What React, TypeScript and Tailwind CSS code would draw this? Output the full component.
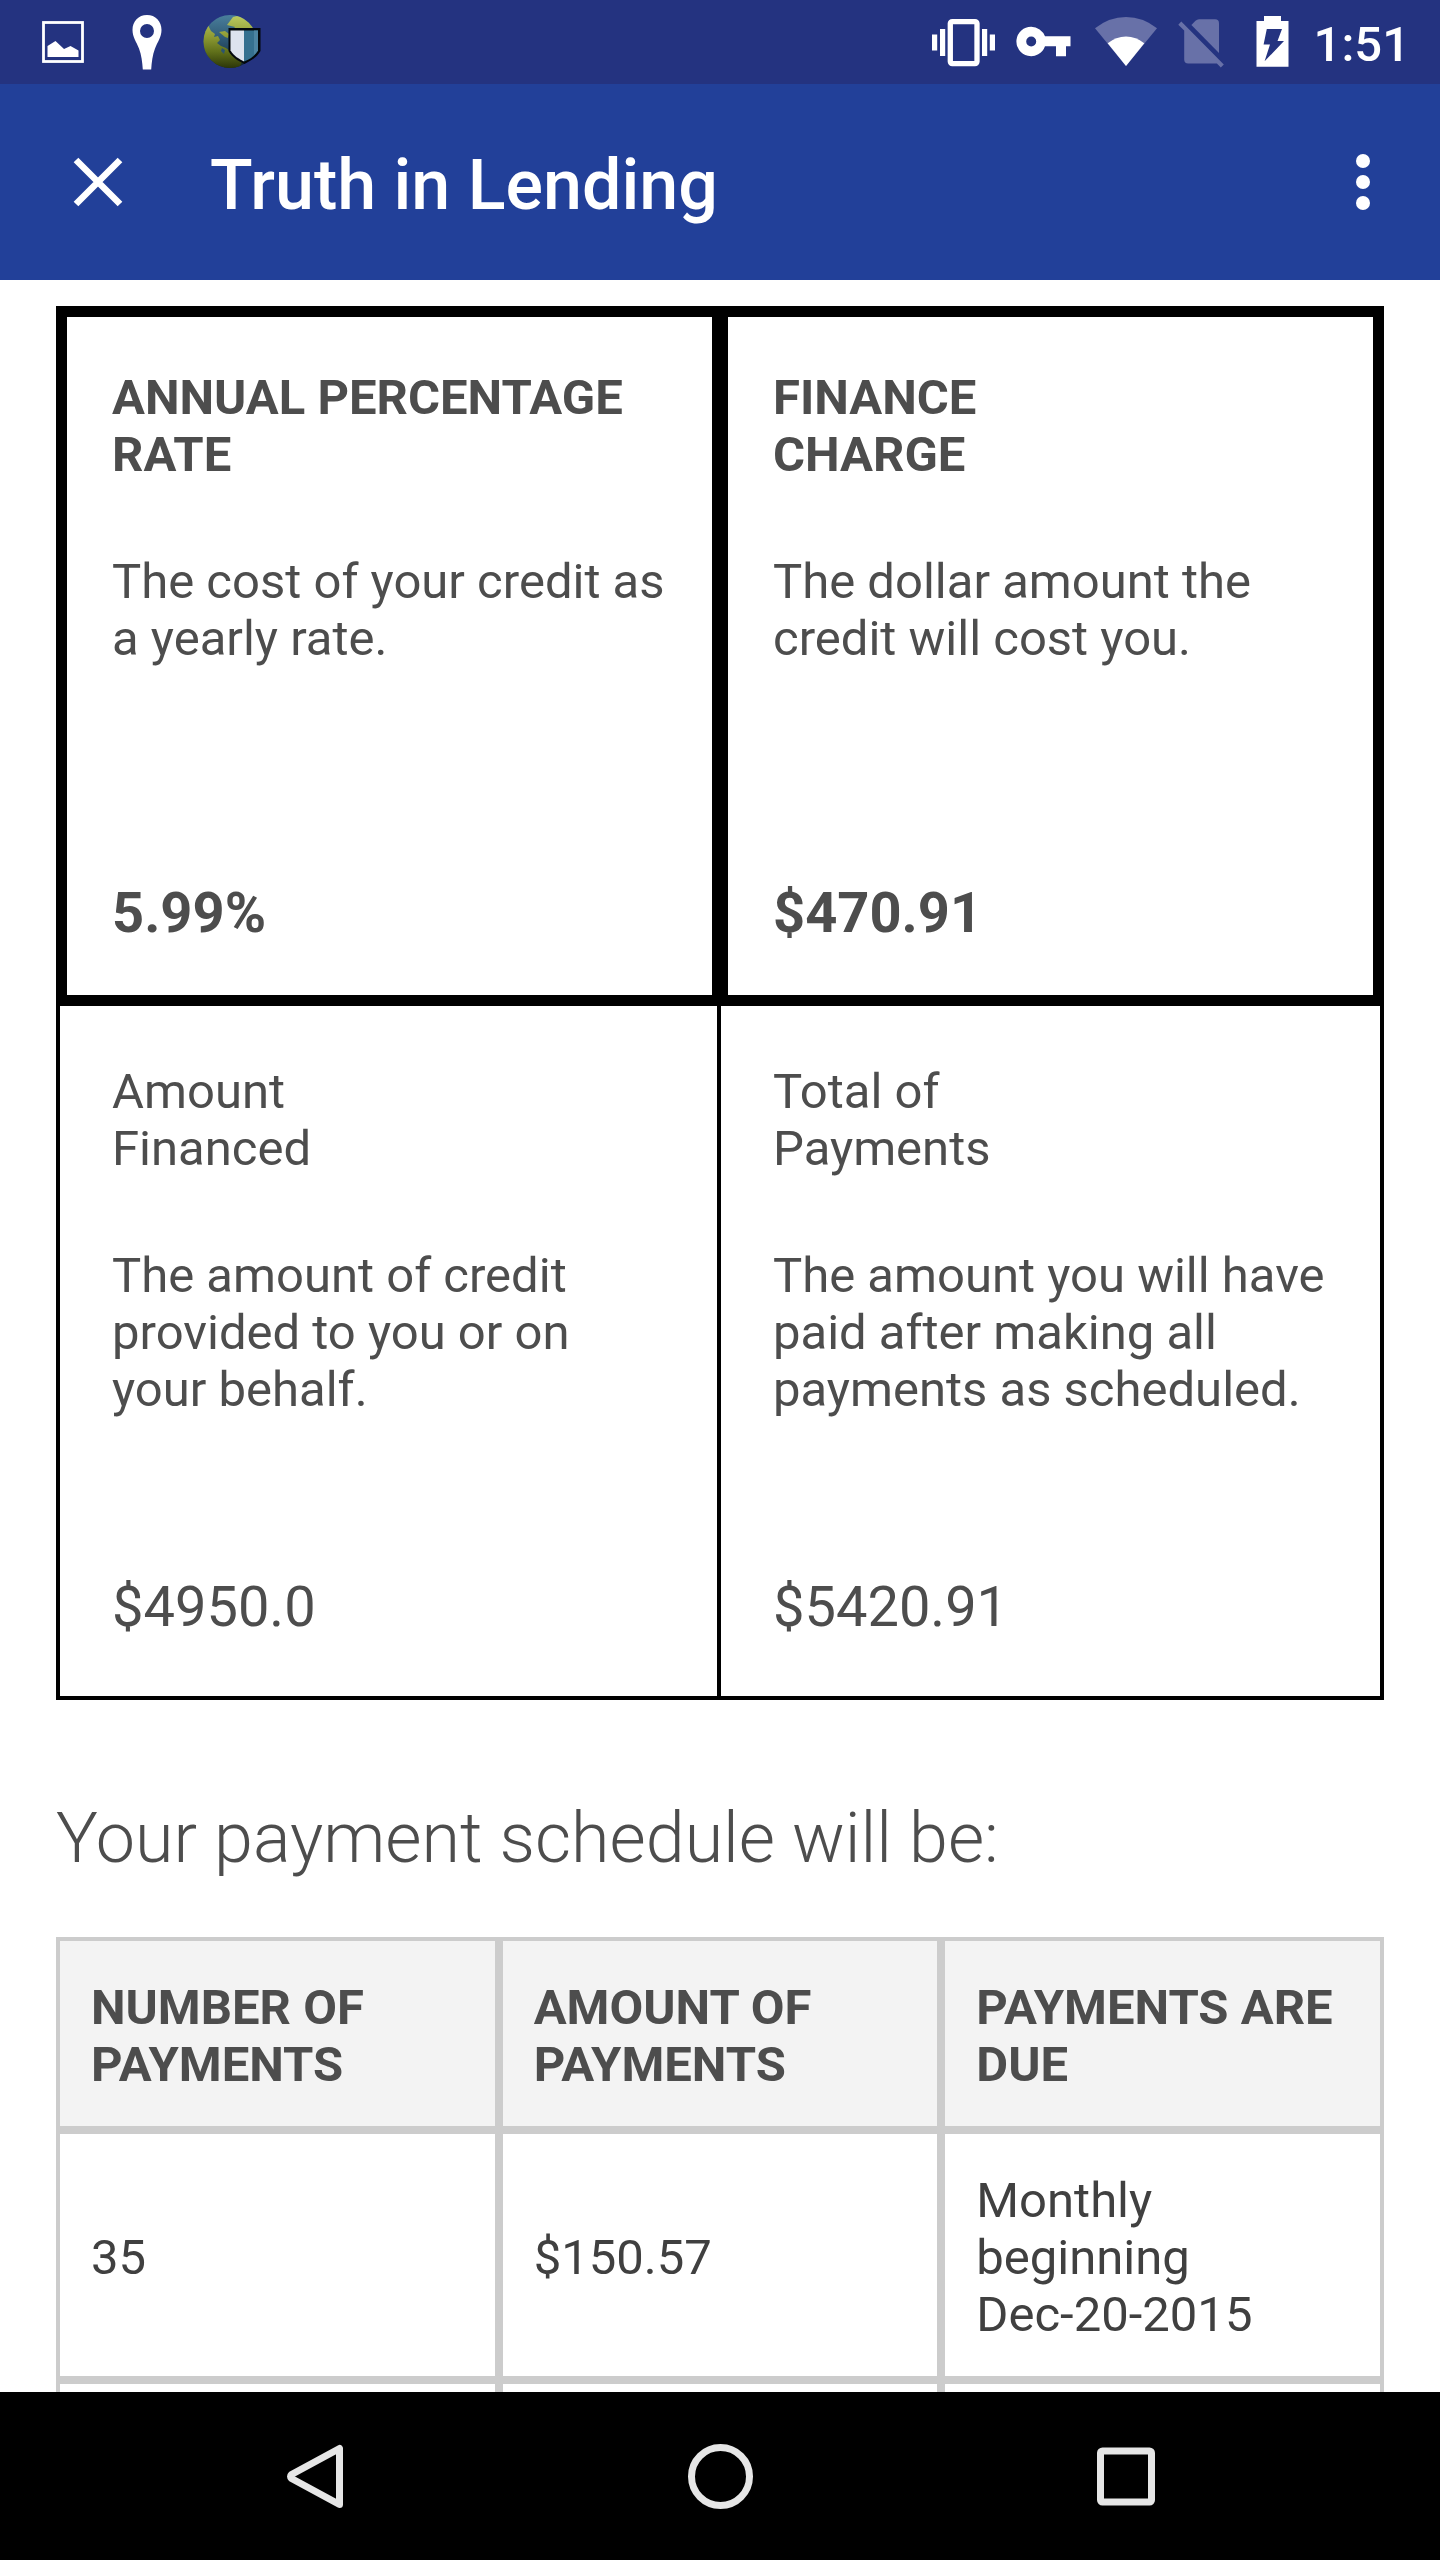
import React from "react";

type Disclosure = {
  title: React.ReactNode;
  description: string;
  value: string;
};

const primary: Disclosure[] = [
  {
    title: "ANNUAL PERCENTAGE RATE",
    description: "The cost of your credit as a yearly rate.",
    value: "5.99%",
  },
  {
    title: (
      <>
        FINANCE
        <br />
        CHARGE
      </>
    ),
    description: "The dollar amount the credit will cost you.",
    value: "$470.91",
  },
];

const secondary: Disclosure[] = [
  {
    title: (
      <>
        Amount
        <br />
        Financed
      </>
    ),
    description: "The amount of credit provided to you or on your behalf.",
    value: "$4950.0",
  },
  {
    title: (
      <>
        Total of
        <br />
        Payments
      </>
    ),
    description: "The amount you will have paid after making all payments as scheduled.",
    value: "$5420.91",
  },
];

const headings = ["NUMBER OF PAYMENTS", "AMOUNT OF PAYMENTS", "PAYMENTS ARE DUE"];

function ImageIcon() {
  return (
    <svg width="84" height="84" viewBox="0 0 84 84" aria-hidden="true">
      <rect x="22.5" y="22.5" width="39" height="39" fill="none" stroke="#fff" strokeWidth="2.8" />
      <path d="M26.5 57V46L34.5 41 43 49 49.5 46 57.5 50.5V57Z" fill="#fff" />
    </svg>
  );
}

function PinIcon() {
  return (
    <svg width="84" height="84" viewBox="0 0 84 84" aria-hidden="true">
      <path
        fill="#fff"
        fillRule="evenodd"
        d="M42 15C33.5 15 27.5 21.3 27.5 30C27.5 37 31.5 42 34 48.5C36.5 55 37.3 62 37.8 69.5H46.2C46.7 62 47.5 55 50 48.5C52.5 42 56.5 37 56.5 30C56.5 21.3 50.5 15 42 15ZM42 24A7 7 0 1 1 42 38A7 7 0 1 1 42 24Z"
      />
    </svg>
  );
}

function GlobeShieldIcon() {
  return (
    <svg width="84" height="84" viewBox="0 0 84 84" aria-hidden="true">
      <defs>
        <linearGradient id="sea" x1="0" y1="0" x2="0" y2="1">
          <stop offset="0" stopColor="#4a7f9c" />
          <stop offset="0.5" stopColor="#2b5470" />
          <stop offset="1" stopColor="#10222e" />
        </linearGradient>
        <linearGradient id="land" gradientUnits="userSpaceOnUse" x1="0" y1="15" x2="0" y2="68">
          <stop offset="0" stopColor="#bccb62" />
          <stop offset="0.4" stopColor="#8f9c34" />
          <stop offset="0.7" stopColor="#5f6f1a" />
          <stop offset="1" stopColor="#2c3608" />
        </linearGradient>
        <clipPath id="globe">
          <circle cx="41" cy="41.5" r="26.5" />
        </clipPath>
      </defs>
      <circle cx="41" cy="41.5" r="26.5" fill="url(#sea)" />
      <g clipPath="url(#globe)" fill="url(#land)">
        <path d="M14 25H19L22 31 26 34 25 37 29 36 31 40 28 43 32 46 37 48 41 51 44 56 53 62 50 68H14Z" />
        <path d="M44 17L52 15 62 20 68 30H54L48 33 43 31 46 27 38 25 41 21Z" />
        <path d="M30 32L36 31 40 34 39 38 36 37Z" />
      </g>
      <path d="M33 48L36 50 35 54 32 51Z" fill="#2b5470" />
      <path d="M39.5 28H71.5V51C68 57 62 61 55.5 64C49 61 43 57 39.5 51Z" fill="#03080d" />
      <path d="M41.5 30.5H55V61.5C50 59 45 56 41.5 50.5Z" fill="#dde3ee" />
      <path d="M55 30.5H69V50.500C66 56 61 59 55 61.5Z" fill="#35708f" />
      <path d="M65 30.5H69V50.500L65 55Z" fill="#4c84a2" />
    </svg>
  );
}

function VibrateIcon() {
  return (
    <svg width="63" height="84" viewBox="0 0 63 84" fill="#fff" aria-hidden="true">
      <rect x="18.3" y="21.6" width="26.7" height="42" rx="2" fill="none" stroke="#fff" strokeWidth="5.3" />
      <rect x="0" y="34.5" width="5.2" height="16" />
      <rect x="8" y="29" width="5.2" height="27" />
      <rect x="50" y="29" width="5.2" height="27" />
      <rect x="57.8" y="34.5" width="5.2" height="16" />
    </svg>
  );
}

function KeyIcon() {
  return (
    <svg width="58" height="84" viewBox="0 0 58 84" aria-hidden="true">
      <path
        fill="#fff"
        fillRule="evenodd"
        d="M15.2 26.8A14.7 14.7 0 1 0 29 46.3H40V56.3H50V46.3H54.5V36.3H29A14.7 14.7 0 0 0 15.2 26.8ZM15.2 36.5A5 5 0 1 1 15.2 46.5A5 5 0 1 1 15.2 36.5Z"
      />
    </svg>
  );
}

function WifiIcon() {
  return (
    <svg width="62" height="84" viewBox="0 0 62 84" aria-hidden="true">
      <path d="M31 66L0 28.3Q14 17 31 17T62 28.3Z" fill="#6871a8" />
      <path d="M31 66L12.7 43.3Q21 36.5 31 36.5T49.3 43.3Z" fill="#fff" />
    </svg>
  );
}

function NoSimIcon() {
  return (
    <svg width="57" height="84" viewBox="0 0 57 84" fill="#6871a8" aria-hidden="true">
      <path d="M13.4 25L17.5 20.8Q19 19.3 21 19.3H37Q41 19.3 41 23.3V53Z" />
      <path d="M0.3 24.7L3.3 21.6 45.8 64.4 42.8 67.4 38.9 63.5H10.2Q6.2 63.5 6.2 59.5V30.6Z" />
    </svg>
  );
}

function BatteryIcon() {
  return (
    <svg width="33" height="84" viewBox="0 0 33 84" aria-hidden="true">
      <path
        fill="#fff"
        fillRule="evenodd"
        d="M8 16H25V21H32.5V66.8H0.5V21H8ZM10.8 29L7.6 44.5H14L8.6 61.3 28 41H21.5L26 29Z"
      />
    </svg>
  );
}

function StatusBar() {
  return (
    <div className="flex h-[84px] shrink-0 items-center justify-between bg-[#243380] pl-[21px] pr-[30px] text-white">
      <div className="flex">
        <ImageIcon />
        <PinIcon />
        <GlobeShieldIcon />
      </div>
      <div className="flex items-center gap-[21px]">
        <VibrateIcon />
        <KeyIcon />
        <WifiIcon />
        <NoSimIcon />
        <BatteryIcon />
        <span className="pl-1 pt-1 text-[49px] font-medium leading-[57px]">1:51</span>
      </div>
    </div>
  );
}

function AppBar() {
  return (
    <header className="flex h-[196px] shrink-0 items-center bg-[#224099] pl-14 pr-[35px] text-white">
      <button type="button" aria-label="Close" className="flex size-[84px] items-center justify-center">
        <svg width="50" height="50" viewBox="0 0 50 50" stroke="#fff" strokeWidth="6.6" aria-hidden="true">
          <path d="M3 3L47 47M47 3L3 47" />
        </svg>
      </button>
      <h1 className="flex-1 pl-[70px] pt-1.5 text-[70px] font-medium leading-[82px]">Truth in Lending</h1>
      <button type="button" aria-label="More options" className="flex size-[84px] items-center justify-center">
        <svg width="16" height="56" viewBox="0 0 16 56" fill="#fff" aria-hidden="true">
          <circle cx="8" cy="7" r="7" />
          <circle cx="8" cy="28" r="7" />
          <circle cx="8" cy="49" r="7" />
        </svg>
      </button>
    </header>
  );
}

function DisclosureCell({ item, className }: { item: Disclosure; className: string }) {
  return (
    <div className={"border-black pr-[45px] " + className}>
      <h2 className="text-[49px] leading-[57px]">{item.title}</h2>
      <p className="mt-[70px] min-h-[327px] text-[49px] font-normal leading-[57px]">{item.description}</p>
      <p className="text-[56px] leading-[66px]">{item.value}</p>
    </div>
  );
}

function PaymentTable() {
  const cell = "border-4 border-[#cccccc] pl-[31px] pr-6 pt-[38px] pb-[33px] text-left";
  return (
    <table className="w-full table-fixed border-separate border-spacing-0 text-[49px] leading-[57px]">
      <thead>
        <tr className="bg-[#f3f3f3]">
          {headings.map((h) => (
            <th key={h} scope="col" className={cell + " font-bold"}>
              {h}
            </th>
          ))}
        </tr>
      </thead>
      <tbody className="text-[#404040]">
        <tr>
          <td className={cell}>35</td>
          <td className={cell}>$150.57</td>
          <td className={cell}>
            Monthly beginning
            <br />
            Dec-20-2015
          </td>
        </tr>
        <tr>
          <td className={cell} />
          <td className={cell} />
          <td className={cell} />
        </tr>
      </tbody>
    </table>
  );
}

function NavBar() {
  const button = "flex items-center justify-center";
  return (
    <nav className="h-[168px] shrink-0 bg-black" aria-label="System">
      <div className="mx-auto grid h-full max-w-[1218px] grid-cols-3">
        <button type="button" aria-label="Back" className={button}>
          <svg width="72" height="72" viewBox="0 0 72 72" aria-hidden="true">
            <path
              d="M61.5 8.5V64.5L13.5 38.5Q11.5 36.5 13.5 34.5Z"
              fill="none"
              stroke="#e6e6e6"
              strokeWidth="7"
              strokeLinejoin="round"
            />
          </svg>
        </button>
        <button type="button" aria-label="Home" className={button}>
          <svg width="72" height="72" viewBox="0 0 72 72" aria-hidden="true">
            <circle cx="36.5" cy="36.5" r="29" fill="none" stroke="#e6e6e6" strokeWidth="7" />
          </svg>
        </button>
        <button type="button" aria-label="Overview" className={button}>
          <svg width="72" height="72" viewBox="0 0 72 72" aria-hidden="true">
            <rect x="10.5" y="11" width="51" height="51" rx="2" fill="none" stroke="#e6e6e6" strokeWidth="7" />
          </svg>
        </button>
      </div>
    </nav>
  );
}

export default function App() {
  return (
    <div className="flex h-screen flex-col bg-white font-['Roboto',sans-serif] text-[#4d4d4d]">
      <StatusBar />
      <AppBar />
      <main className="min-h-0 flex-1 overflow-hidden px-14 pt-[26px]">
        <div className="grid grid-cols-2">
          <DisclosureCell
            item={primary[0]}
            className="border-y-[11px] border-l-[11px] border-r-8 pb-[49px] pl-[45px] pt-[52px] font-bold"
          />
          <DisclosureCell
            item={primary[1]}
            className="border-y-[11px] border-l-8 border-r-[11px] pb-[49px] pl-[45px] pt-[52px] font-bold"
          />
          <DisclosureCell
            item={secondary[0]}
            className="border-b-4 border-l-4 border-r-[3px] pb-14 pl-[52px] pt-[57px]"
          />
          <DisclosureCell
            item={secondary[1]}
            className="border-b-4 border-l border-r-4 pb-14 pl-[52px] pt-[57px]"
          />
        </div>
        <h2 className="mb-[58px] mt-[97px] text-[70px] font-light leading-[82px]">Your payment schedule will be:</h2>
        <PaymentTable />
      </main>
      <NavBar />
    </div>
  );
}
